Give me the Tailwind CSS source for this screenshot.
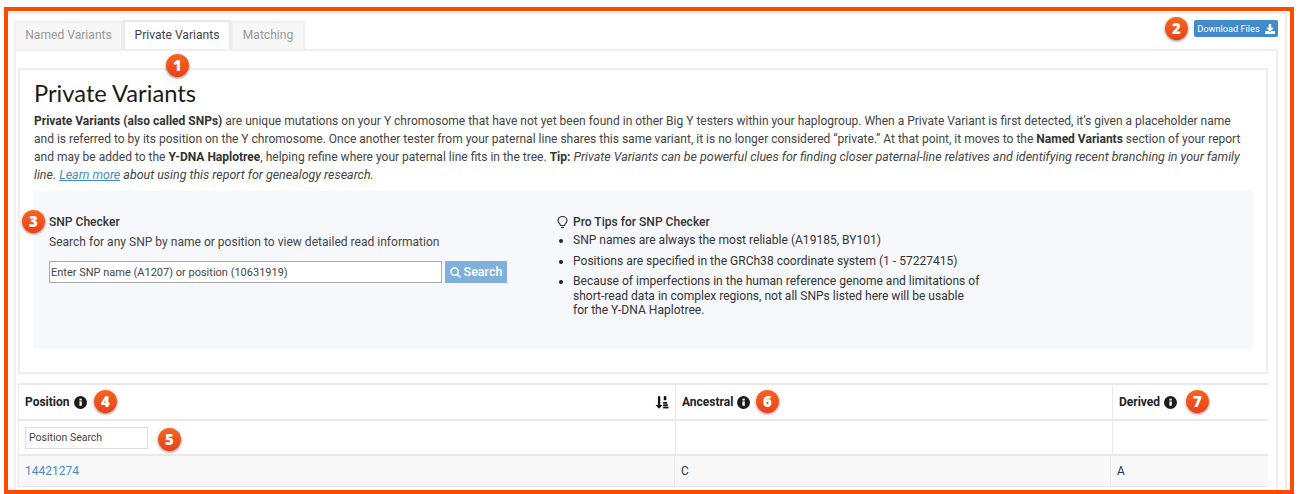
<!DOCTYPE html>
<html lang="en">
<head>
  <meta charset="UTF-8" />
  <title>Private Variants</title>
  <script src="https://cdn.jsdelivr.net/npm/@tailwindcss/browser@4"></script>
</head>
<body class="bg-white font-['Roboto',sans-serif] text-[#333]">
  <div class="w-[1304px] h-[494px] pl-[4px] pt-[7px] overflow-hidden">
    <div class="relative w-[1290px] h-[487px] border-4 border-[#ff4a00] overflow-hidden">
      <div class="ml-0 mr-[3px] h-[483px] mt-px border-t-2 border-r-2 border-[#ededed] pl-[6px] pr-[7px] pt-[6px]">

        <!-- Tabs -->
        <div class="flex items-start justify-between h-[29px]">
          <div class="flex h-[29px] text-[12.1px]">
            <div class="w-[109px] h-[28px] mt-px pb-[2px] flex items-center justify-center bg-[#f7f7f7] border-2 border-b-0 border-[#efefef] text-[#999]">Named Variants</div>
            <div class="w-[108px] h-[29px] flex items-center justify-center bg-white border-2 border-b-0 border-[#e9e9e9] text-[#444] z-10">Private Variants</div>
            <div class="w-[74px] h-[28px] mt-px pb-[2px] flex items-center justify-center bg-[#f7f7f7] border-2 border-b-0 border-[#efefef] text-[#999]">Matching</div>
          </div>
          <button class="w-[84px] h-[17px] bg-[#428bca] rounded-[2px] text-white text-[9.2px] flex items-center justify-center gap-[5px]">
            Download Files
            <svg class="w-[10px] h-[10px]" viewBox="0 0 512 512" fill="currentColor"><path d="M216 0h80c13 0 24 11 24 24v168h88c18 0 27 21 14 34L270 380c-8 8-20 8-28 0L90 226c-13-13-4-34 14-34h88V24c0-13 11-24 24-24zM512 376v112c0 13-11 24-24 24H24c-13 0-24-11-24-24V376c0-13 11-24 24-24h147l49 49c20 20 52 20 72 0l49-49h147c13 0 24 11 24 24z"/></svg>
          </button>
        </div>

        <!-- Tab pane -->
        <div class="h-[450px] mr-0 border-t-2 border-l-2 border-r-2 border-[#efefef] pl-[2px] pr-[8px] pt-[17px]">
          <div class="h-[306px] border-2 border-[#efefef] px-[14px]">
            <h1 class="font-['Lato',sans-serif] text-[23.7px] leading-[28px] mt-[9px] text-[#1a1a1a]">Private Variants</h1>
            <p class="text-[12.03px] leading-[18px] mt-[5px] whitespace-nowrap text-[#444]">
              <b class="font-bold text-[#333]">Private Variants (also called SNPs)</b> are unique mutations on your Y chromosome that have not yet been found in other Big Y testers within your haplogroup. When a Private Variant is first detected, it’s given a placeholder name<br />
              and is referred to by its position on the Y chromosome. Once another tester from your paternal line shares this same variant, it is no longer considered “private.” At that point, it moves to the <b class="font-bold text-[#333]">Named Variants</b> section of your report<br />
              and may be added to the <b class="font-bold text-[#333]">Y-DNA Haplotree</b>, helping refine where your paternal line fits in the tree. <b class="font-bold text-[#333]">Tip:</b> <i class="text-[12.45px]">Private Variants can be powerful clues for finding closer paternal-line relatives and identifying recent branching in your family</i><br />
              <i class="text-[12.45px]">line. <a class="text-[#428bca] underline">Learn more</a> about using this report for genealogy research.</i>
            </p>

            <!-- SNP checker -->
            <div class="mt-[7px] -ml-px h-[158px] w-[1220px] bg-[#f7f8fc] pl-[16px] pt-[23px] flex text-[12.05px]">
              <div class="w-[508px]">
                <div class="font-medium text-[#333] leading-[16px]">SNP Checker</div>
                <div class="mt-[4px] leading-[16px] text-[#444]">Search for any SNP by name or position to view detailed read information</div>
                <div class="mt-[11px] flex gap-[3px]">
                  <input class="w-[393px] h-[22px] bg-white border border-[#aaa] px-[1px] text-[11px] text-[#333] placeholder:text-[#444]" placeholder="Enter SNP name (A1207) or position (10631919)" />
                  <button class="w-[62px] h-[22px] bg-[#7fb0dc] text-white text-[12.5px] font-medium flex items-center justify-center gap-[3px]">
                    <svg class="w-[11px] h-[11px]" viewBox="0 0 24 24" fill="none" stroke="currentColor" stroke-width="3.4"><circle cx="10" cy="10" r="8"/><path d="M16 16l7 7"/></svg>
                    Search
                  </button>
                </div>
              </div>
              <div class="w-[430px]">
                <div class="flex items-center gap-[5px] leading-[16px] font-medium text-[#333]">
                  <svg class="w-[11px] h-[13px] text-[#333]" viewBox="0 0 22 26" fill="none" stroke="currentColor" stroke-width="2.4"><path d="M7 19c0-3-5-5-5-10a9 8 0 0 1 18 0c0 5-5 7-5 10z"/><path d="M8 23h6" /></svg>
                  Pro Tips for SNP Checker
                </div>
                <ul class="list-disc pl-[16px] leading-[14.5px] text-[#333] marker:text-[#222]">
                  <li class="py-[3px]">SNP names are always the most reliable (A19185, BY101)</li>
                  <li class="py-[3px]">Positions are specified in the GRCh38 coordinate system (1 - 57227415)</li>
                  <li class="py-[3px]">Because of imperfections in the human reference genome and limitations of<br />short-read data in complex regions, not all SNPs listed here will be usable<br />for the Y-DNA Haplotree.</li>
                </ul>
              </div>
            </div>
          </div>

          <!-- Variants table -->
          <div class="mt-[9px] w-[1250px] text-[12px]">
            <div class="grid grid-cols-[657px_437px_156px] h-[38px] border-t-2 border-b-2 border-[#e9e9e9] font-bold text-[#222]">
              <div class="border-l border-[#e9e9e9] pl-[6px] pr-[6px] flex items-center gap-[4px]">
                Position
                <svg class="w-[13px] h-[13px]" viewBox="0 0 24 24"><circle cx="12" cy="12" r="12" fill="#1c1c1c"/><rect x="10" y="10" width="4.4" height="8" fill="#fff"/><rect x="10" y="5" width="4.4" height="3.4" fill="#fff"/></svg>
                <svg class="ml-auto w-[14px] h-[14px]" viewBox="0 0 24 24" fill="#111"><path d="M5 2h4v15h4l-6 6.5L1 17h4z"/><rect x="15" y="2" width="4.4" height="7"/><rect x="14" y="12" width="7" height="3"/><rect x="14" y="16" width="8" height="3"/><rect x="14" y="20" width="9" height="3"/></svg>
              </div>
              <div class="border-l border-[#e9e9e9] pl-[6px] flex items-center gap-[4px]">
                Ancestral
                <svg class="w-[13px] h-[13px]" viewBox="0 0 24 24"><circle cx="12" cy="12" r="12" fill="#1c1c1c"/><rect x="10" y="10" width="4.4" height="8" fill="#fff"/><rect x="10" y="5" width="4.4" height="3.4" fill="#fff"/></svg>
              </div>
              <div class="border-l border-[#e9e9e9] pl-[6px] flex items-center gap-[4px]">
                Derived
                <svg class="w-[13px] h-[13px]" viewBox="0 0 24 24"><circle cx="12" cy="12" r="12" fill="#1c1c1c"/><rect x="10" y="10" width="4.4" height="8" fill="#fff"/><rect x="10" y="5" width="4.4" height="3.4" fill="#fff"/></svg>
              </div>
            </div>
            <div class="grid grid-cols-[657px_437px_156px] h-[35px] border-b-2 border-[#e9e9e9]">
              <div class="border-l border-[#e9e9e9] pl-[6px] flex items-center">
                <input class="w-[123px] h-[22px] border border-[#ddd] px-[3px] text-[10.5px] placeholder:text-[#444]" placeholder="Position Search" />
              </div>
              <div class="border-l border-[#e9e9e9]"></div>
              <div class="border-l border-[#e9e9e9]"></div>
            </div>
            <div class="grid grid-cols-[656px_436px_158px] h-[31px] bg-[#f8f8f8] border-b border-[#e9e9e9] items-stretch">
              <div class="border-l border-[#e9e9e9] pl-[6px] flex items-center text-[#4a8ccb]">14421274</div>
              <div class="border-l border-[#e9e9e9] pl-[6px] flex items-center text-[#333]">C</div>
              <div class="border-l border-[#e9e9e9] pl-[6px] flex items-center text-[#333]">A</div>
            </div>
          </div>
        </div>
      </div>

      <!-- Numbered callouts -->
      <div class="absolute left-[158px] top-[43px] w-[23px] h-[23px] rounded-full bg-gradient-to-b from-[#f7641f] to-[#e9401a] shadow-[0_1px_3px_rgba(0,0,0,0.45)] text-white font-['Open_Sans',sans-serif] font-extrabold text-[15px] flex items-center justify-center">1</div>
      <div class="absolute left-[1157px] top-[6px] w-[23px] h-[23px] rounded-full bg-gradient-to-b from-[#f7641f] to-[#e9401a] shadow-[0_1px_3px_rgba(0,0,0,0.45)] text-white font-['Open_Sans',sans-serif] font-extrabold text-[15px] flex items-center justify-center">2</div>
      <div class="absolute left-[14px] top-[199px] w-[23px] h-[23px] rounded-full bg-gradient-to-b from-[#f7641f] to-[#e9401a] shadow-[0_1px_3px_rgba(0,0,0,0.45)] text-white font-['Open_Sans',sans-serif] font-extrabold text-[15px] flex items-center justify-center">3</div>
      <div class="absolute left-[86px] top-[379px] w-[23px] h-[23px] rounded-full bg-gradient-to-b from-[#f7641f] to-[#e9401a] shadow-[0_1px_3px_rgba(0,0,0,0.45)] text-white font-['Open_Sans',sans-serif] font-extrabold text-[15px] flex items-center justify-center">4</div>
      <div class="absolute left-[150px] top-[417px] w-[23px] h-[23px] rounded-full bg-gradient-to-b from-[#f7641f] to-[#e9401a] shadow-[0_1px_3px_rgba(0,0,0,0.45)] text-white font-['Open_Sans',sans-serif] font-extrabold text-[15px] flex items-center justify-center">5</div>
      <div class="absolute left-[748px] top-[379px] w-[23px] h-[23px] rounded-full bg-gradient-to-b from-[#f7641f] to-[#e9401a] shadow-[0_1px_3px_rgba(0,0,0,0.45)] text-white font-['Open_Sans',sans-serif] font-extrabold text-[15px] flex items-center justify-center">6</div>
      <div class="absolute left-[1178px] top-[379px] w-[23px] h-[23px] rounded-full bg-gradient-to-b from-[#f7641f] to-[#e9401a] shadow-[0_1px_3px_rgba(0,0,0,0.45)] text-white font-['Open_Sans',sans-serif] font-extrabold text-[15px] flex items-center justify-center">7</div>
    </div>
  </div>
</body>
</html>
